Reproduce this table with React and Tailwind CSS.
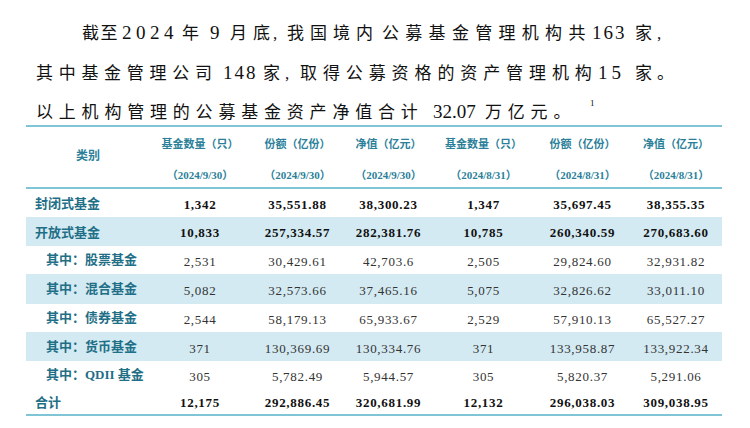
import React from "react";

const cols = "grid grid-cols-[124px_100px_95px_87px_103px_95px_92px]";

const rows = [
  { label: "封闭式基金", main: true, h: "h-[28px]", bg: false, vals: ["1,342", "35,551.88", "38,300.23", "1,347", "35,697.45", "38,355.35"] },
  { label: "开放式基金", main: true, h: "h-[29px]", bg: true, vals: ["10,833", "257,334.57", "282,381.76", "10,785", "260,340.59", "270,683.60"] },
  { label: "其中：股票基金", main: false, h: "h-[28px]", bg: false, vals: ["2,531", "30,429.61", "42,703.6", "2,505", "29,824.60", "32,931.82"] },
  { label: "其中：混合基金", main: false, h: "h-[30px]", bg: true, vals: ["5,082", "32,573.66", "37,465.16", "5,075", "32,826.62", "33,011.10"] },
  { label: "其中：债券基金", main: false, h: "h-[28px]", bg: false, vals: ["2,544", "58,179.13", "65,933.67", "2,529", "57,910.13", "65,527.27"] },
  { label: "其中：货币基金", main: false, h: "h-[29px]", bg: true, vals: ["371", "130,369.69", "130,334.76", "371", "133,958.87", "133,922.34"] },
  { label: "其中：QDII 基金", main: false, h: "h-[28px]", bg: false, vals: ["305", "5,782.49", "5,944.57", "305", "5,820.37", "5,291.06"] },
  { label: "合计", main: true, h: "h-[25px]", bg: false, vals: ["12,175", "292,886.45", "320,681.99", "12,132", "296,038.03", "309,038.95"] },
];

const headers = [
  ["基金数量（只）", "（2024/9/30）"],
  ["份额（亿份）", "（2024/9/30）"],
  ["净值（亿元）", "（2024/9/30）"],
  ["基金数量（只）", "（2024/8/31）"],
  ["份额（亿份）", "（2024/8/31）"],
  ["净值（亿元）", "（2024/8/31）"],
];

const cjk = { fontFamily: '"Liberation Serif", "Noto Sans CJK SC", serif' };

export default function App() {
  return (
    <div className="w-[750px] h-[428px] bg-white overflow-hidden text-[#1a1a1a]" style={cjk}>
      <div className="pt-[14px] h-[125px] text-[17px] leading-[38.5px] text-[#111]">
        <div className="pl-[82px] flex items-baseline whitespace-nowrap">
          <span className="w-[40px] shrink-0 tracking-[1.5px]">截至</span>
          <span className="w-[60px] shrink-0 text-[19px] tracking-[4.5px]">2024</span>
          <span className="w-[28px] shrink-0">年</span>
          <span className="w-[20px] shrink-0 text-[19px]">9</span>
          <span className="w-[23px] shrink-0">月</span>
          <span className="w-[20px] shrink-0">底</span>
          <span className="w-[14px] shrink-0">,</span>
          <span className="w-[95px] shrink-0 tracking-[6px]">我国境内</span>
          <span className="w-[210px] shrink-0 tracking-[6.3px]">公募基金管理机构共</span>
          <span className="w-[43px] shrink-0 text-[19px] tracking-[2px]">163</span>
          <span className="w-[22px] shrink-0">家</span>
          <span>,</span>
        </div>
        <div className="pl-[36px] flex items-baseline whitespace-nowrap">
          <span className="w-[187px] shrink-0 tracking-[5.7px]">其中基金管理公司</span>
          <span className="w-[40px] shrink-0 text-[19px] tracking-[2px]">148</span>
          <span className="w-[22px] shrink-0">家</span>
          <span className="w-[15px] shrink-0">,</span>
          <span className="w-[298px] shrink-0 tracking-[5.9px]">取得公募资格的资产管理机构</span>
          <span className="w-[37px] shrink-0 text-[19px] tracking-[4px]">15</span>
          <span className="tracking-[5px]">家。</span>
        </div>
        <div className="pl-[36px] flex items-baseline whitespace-nowrap">
          <span className="w-[397px] shrink-0 tracking-[5.8px]">以上机构管理的公募基金资产净值合计</span>
          <span className="w-[52px] shrink-0 text-[19px] tracking-[0px]">32.07</span>
          <span className="w-[105px] shrink-0 tracking-[5.8px]">万亿元。</span>
          <span className="text-[9px] leading-none relative top-[-12px]">1</span>
        </div>
      </div>

      <div className="ml-[26px] w-[696px] border-t-2 border-b-2 border-[#7fc5d6]">
        <div className={`${cols} h-[62px] border-b-2 border-[#7fc5d6] text-[#2b7f99] font-bold text-[11px]`}>
          <div className="flex items-center justify-center pb-[2px] text-[12px]">类别</div>
          {headers.map((h, i) => (
            <div key={i} className="flex flex-col items-center justify-between pt-[9px] pb-[4px]">
              <span>{h[0]}</span>
              <span>{h[1]}</span>
            </div>
          ))}
        </div>
        {rows.map((r, i) => (
          <div key={i} className={`${cols} ${r.h} ${r.bg ? "bg-[#d3eaf2]" : ""}`}>
            <div
              className={`flex items-center font-bold text-[13px] text-[#1f6f87] ${r.main ? "pl-[9px] pt-[2px]" : "pl-[20px]"}`}
            >
              {r.label}
            </div>
            {r.vals.map((v, j) => (
              <div
                key={j}
                className={`flex items-center justify-center tracking-[0.7px] text-[13px] ${
                  r.main ? "font-bold text-[#111] pt-[3px]" : "text-[#333] pt-[4px]"
                }`}
              >
                {v}
              </div>
            ))}
          </div>
        ))}
      </div>
    </div>
  );
}
